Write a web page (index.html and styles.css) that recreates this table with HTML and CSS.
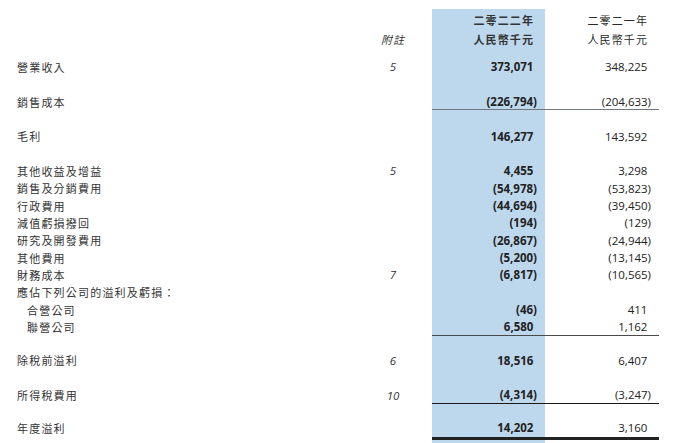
FILE: index.html
```html
<!DOCTYPE html>
<html lang="zh-Hant">
<head>
<meta charset="utf-8">
<title>綜合損益表</title>
<link rel="stylesheet" href="styles.css">
</head>
<body>
<div class="sheet">
  <div class="row head">
    <div class="label"></div>
    <div class="note"><span class="note-h">附註</span></div>
    <div class="sepcol"></div>
    <div class="num cur hd"><span class="p">二零二二年</span><span class="p">人民幣千元</span></div>
    <div class="num prev hd"><span class="p">二零二一年</span><span class="p">人民幣千元</span></div>
  </div>

  <div class="row first">
    <div class="label">營業收入</div><div class="note">5</div><div class="sepcol"></div>
    <div class="num cur"><span class="p">373,071</span></div><div class="num prev"><span class="p">348,225</span></div>
  </div>
  <div class="row sp">
    <div class="label">銷售成本</div><div class="note"></div><div class="sepcol"></div>
    <div class="num cur ln-grey"><span>(226,794)</span></div><div class="num prev ln-grey"><span>(204,633)</span></div>
  </div>
  <div class="row sp">
    <div class="label">毛利</div><div class="note"></div><div class="sepcol"></div>
    <div class="num cur"><span class="p">146,277</span></div><div class="num prev"><span class="p">143,592</span></div>
  </div>

  <div class="row sp">
    <div class="label">其他收益及增益</div><div class="note">5</div><div class="sepcol"></div>
    <div class="num cur"><span class="p">4,455</span></div><div class="num prev"><span class="p">3,298</span></div>
  </div>
  <div class="row">
    <div class="label">銷售及分銷費用</div><div class="note"></div><div class="sepcol"></div>
    <div class="num cur"><span>(54,978)</span></div><div class="num prev"><span>(53,823)</span></div>
  </div>
  <div class="row">
    <div class="label">行政費用</div><div class="note"></div><div class="sepcol"></div>
    <div class="num cur"><span>(44,694)</span></div><div class="num prev"><span>(39,450)</span></div>
  </div>
  <div class="row">
    <div class="label">減值虧損撥回</div><div class="note"></div><div class="sepcol"></div>
    <div class="num cur"><span>(194)</span></div><div class="num prev"><span>(129)</span></div>
  </div>
  <div class="row">
    <div class="label">研究及開發費用</div><div class="note"></div><div class="sepcol"></div>
    <div class="num cur"><span>(26,867)</span></div><div class="num prev"><span>(24,944)</span></div>
  </div>
  <div class="row">
    <div class="label">其他費用</div><div class="note"></div><div class="sepcol"></div>
    <div class="num cur"><span>(5,200)</span></div><div class="num prev"><span>(13,145)</span></div>
  </div>
  <div class="row">
    <div class="label">財務成本</div><div class="note">7</div><div class="sepcol"></div>
    <div class="num cur"><span>(6,817)</span></div><div class="num prev"><span>(10,565)</span></div>
  </div>
  <div class="row">
    <div class="label">應佔下列公司的溢利及虧損：</div><div class="note"></div><div class="sepcol"></div>
    <div class="num cur"></div><div class="num prev"></div>
  </div>
  <div class="row">
    <div class="label sub">合營公司</div><div class="note"></div><div class="sepcol"></div>
    <div class="num cur"><span>(46)</span></div><div class="num prev"><span class="p">411</span></div>
  </div>
  <div class="row">
    <div class="label sub">聯營公司</div><div class="note"></div><div class="sepcol"></div>
    <div class="num cur ln-dark"><span class="p">6,580</span></div><div class="num prev ln-dark"><span class="p">1,162</span></div>
  </div>

  <div class="row sp pbt">
    <div class="label">除稅前溢利</div><div class="note">6</div><div class="sepcol"></div>
    <div class="num cur"><span class="p">18,516</span></div><div class="num prev"><span class="p">6,407</span></div>
  </div>
  <div class="row sp tax">
    <div class="label">所得稅費用</div><div class="note">10</div><div class="sepcol"></div>
    <div class="num cur ln-black"><span>(4,314)</span></div><div class="num prev ln-black"><span>(3,247)</span></div>
  </div>
  <div class="row sp last">
    <div class="label strong">年度溢利</div><div class="note"></div><div class="sepcol"></div>
    <div class="num cur ln-double"><span class="p">14,202</span></div><div class="num prev ln-double"><span class="p">3,160</span></div>
  </div>
</div>
</body>
</html>
```

FILE: styles.css
```css
* {
  box-sizing: border-box;
}

html, body {
  margin: 0;
  padding: 0;
  background: #ffffff;
}

body {
  font-family: "Open Sans", "Noto Sans CJK TC", sans-serif;
  color: #2b2b2b;
  overflow: hidden;
  height: 443px;
}

.sheet {
  margin-top: 9px;
  padding-left: 17px;
  min-height: 434px;
  background-image: linear-gradient(to right,
    transparent 432px, #bdd8ed 432px, #bdd8ed 545px, transparent 545px);
  background-repeat: no-repeat;
}

.row {
  display: grid;
  grid-template-columns: 343px 66px 6px 113px 114px;
  height: 17.33px;
  align-items: stretch;
}

.row.first {
  margin-top: 10.3px;
}

.row.sp {
  margin-top: 17.33px;
}

.row.sp.pbt {
  margin-top: 16px;
}

.row.sp.tax {
  margin-top: 17.5px;
}

.row.sp.last {
  margin-top: 16px;
  height: 20.5px;
}

.label {
  display: flex;
  align-items: center;
  font-family: "Noto Sans CJK TC", sans-serif;
  font-size: 11px;
  letter-spacing: 1.2px;
  color: #333333;
  white-space: nowrap;
}

.label.sub {
  padding-left: 10px;
}

.note {
  display: flex;
  align-items: center;
  justify-content: center;
  font-style: italic;
  font-size: 11.5px;
  color: #333333;
}

.note-h {
  font-family: "Noto Sans CJK TC", sans-serif;
  font-size: 11px;
  letter-spacing: 1px;
}

.num {
  display: flex;
  align-items: center;
  justify-content: flex-end;
  padding-right: 8px;
  font-size: 11.5px;
  color: #222222;
  white-space: nowrap;
}

.num.cur {
  font-weight: 700;
}

.num .p {
  padding-right: 3.6px;
}

.row.head {
  height: auto;
  padding-top: 2px;
}

.row.head .note {
  align-items: flex-end;
  line-height: 18.5px;
}

.num.hd {
  flex-direction: column;
  align-items: flex-end;
  font-family: "Noto Sans CJK TC", sans-serif;
  font-size: 11px;
  line-height: 18.5px;
  letter-spacing: 1.1px;
  font-weight: 400;
  color: #2a2a2a;
}

.num.cur.hd {
  font-weight: 700;
  color: #333333;
}

.num.hd .p {
  padding-right: 3px;
}

.ln-grey {
  border-bottom: 1px solid #6f7880;
}

.ln-dark {
  border-bottom: 1px solid #4a4a4a;
}

.ln-black {
  border-bottom: 1px solid #1a1a1a;
}

.ln-double {
  border-bottom: 3px solid #222222;
}

.row.last .num,
.row.last .label {
  align-items: flex-start;
}
```
